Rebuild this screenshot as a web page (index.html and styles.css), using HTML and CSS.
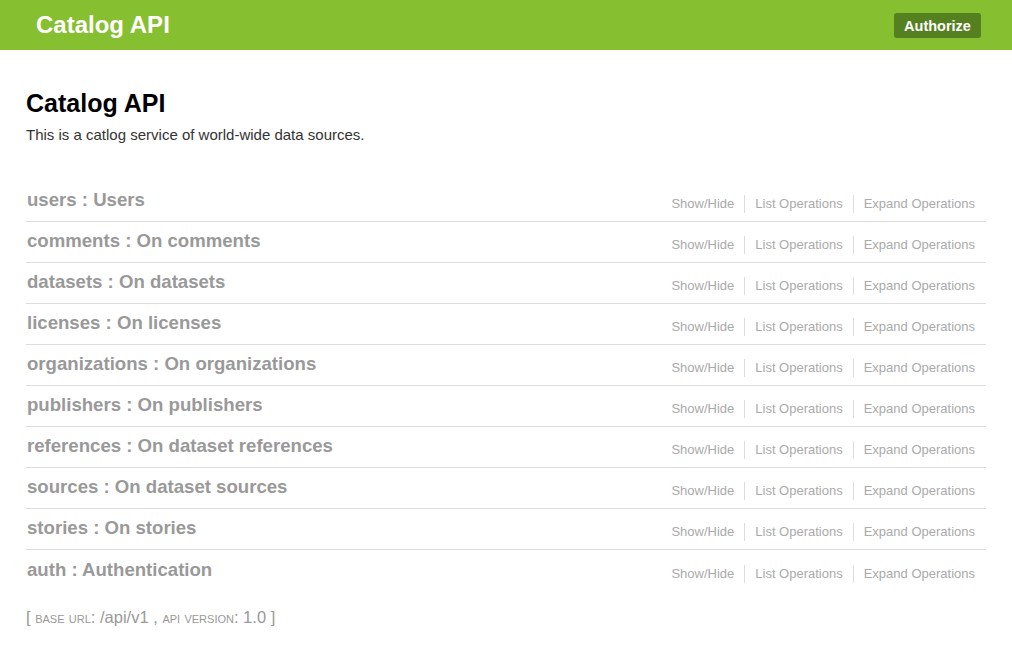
FILE: index.html
```html
<!DOCTYPE html>
<html>
<head>
<meta charset="utf-8">
<link rel="stylesheet" href="styles.css">
</head>
<body>
<header class="topbar">
  <div class="topbar-wrap">
    <span class="brand">Catalog API</span>
    <button class="authorize">Authorize</button>
  </div>
</header>
<main class="wrap">
  <div class="info">
    <h1 class="info-title">Catalog API</h1>
    <p class="info-desc">This is a catlog service of world-wide data sources.</p>
  </div>
  <ul class="resources">
    <li class="resource"><h2 class="res-name">users : Users</h2><ul class="options"><li>Show/Hide</li><li>List Operations</li><li>Expand Operations</li></ul></li>
    <li class="resource"><h2 class="res-name">comments : On comments</h2><ul class="options"><li>Show/Hide</li><li>List Operations</li><li>Expand Operations</li></ul></li>
    <li class="resource"><h2 class="res-name">datasets : On datasets</h2><ul class="options"><li>Show/Hide</li><li>List Operations</li><li>Expand Operations</li></ul></li>
    <li class="resource"><h2 class="res-name">licenses : On licenses</h2><ul class="options"><li>Show/Hide</li><li>List Operations</li><li>Expand Operations</li></ul></li>
    <li class="resource"><h2 class="res-name">organizations : On organizations</h2><ul class="options"><li>Show/Hide</li><li>List Operations</li><li>Expand Operations</li></ul></li>
    <li class="resource"><h2 class="res-name">publishers : On publishers</h2><ul class="options"><li>Show/Hide</li><li>List Operations</li><li>Expand Operations</li></ul></li>
    <li class="resource"><h2 class="res-name">references : On dataset references</h2><ul class="options"><li>Show/Hide</li><li>List Operations</li><li>Expand Operations</li></ul></li>
    <li class="resource"><h2 class="res-name">sources : On dataset sources</h2><ul class="options"><li>Show/Hide</li><li>List Operations</li><li>Expand Operations</li></ul></li>
    <li class="resource"><h2 class="res-name">stories : On stories</h2><ul class="options"><li>Show/Hide</li><li>List Operations</li><li>Expand Operations</li></ul></li>
    <li class="resource last"><h2 class="res-name">auth : Authentication</h2><ul class="options"><li>Show/Hide</li><li>List Operations</li><li>Expand Operations</li></ul></li>
  </ul>
  <div class="footer">[ <span class="sc">base url</span>: /api/v1 , <span class="sc">api version</span>: 1.0 ]</div>
</main>
</body>
</html>
```
FILE: styles.css
```css
* { box-sizing: border-box; }
body {
  margin: 0;
  font-family: "Liberation Sans", Arial, sans-serif;
  background: #fff;
}
.topbar {
  background: #86bf2f;
  height: 50px;
}
.topbar-wrap {
  max-width: 960px;
  margin: 0 auto;
  height: 50px;
  display: flex;
  align-items: center;
  justify-content: space-between;
  padding: 0 5px 0 10px;
}
.brand {
  color: #fff;
  font-weight: bold;
  font-size: 24px;
}
.authorize {
  background: #55801f;
  color: #fff;
  border: none;
  border-radius: 3px;
  font-family: "Liberation Sans", Arial, sans-serif;
  font-weight: bold;
  font-size: 14.5px;
  height: 25px;
  width: 87px;
  padding: 0;
  margin-top: 1px;
}
.wrap {
  max-width: 960px;
  margin: 0 auto;
}
.info { padding-top: 38px; }
.info-title {
  margin: 0;
  font-size: 25px;
  font-weight: bold;
  color: #000;
  line-height: 30px;
}
.info-desc {
  margin: 8px 0 0;
  font-size: 15px;
  color: #333;
}
.resources {
  list-style: none;
  margin: 38px 0 0;
  padding: 0;
}
.resource {
  display: flex;
  align-items: center;
  justify-content: space-between;
  height: 41px;
  border-bottom: 1px solid #ddd;
}
.resource.last { border-bottom: none; }
.res-name {
  margin: 0;
  font-size: 18.6px;
  font-weight: bold;
  color: #999;
  padding-left: 1px;
  position: relative;
  top: -1px;
}
.options {
  list-style: none;
  display: flex;
  margin: 6px 0 0;
  padding: 0 1px 0 0;
}
.options li {
  font-size: 13px;
  color: #aaa;
  padding: 2px 10px;
  border-right: 1px solid #ddd;
  line-height: 14px;
}
.options li:last-child { border-right: none; }
.footer {
  margin-top: 17px;
  font-size: 16.5px;
  color: #999;
}
.sc { font-variant: small-caps; font-size: 15.5px; }
```
